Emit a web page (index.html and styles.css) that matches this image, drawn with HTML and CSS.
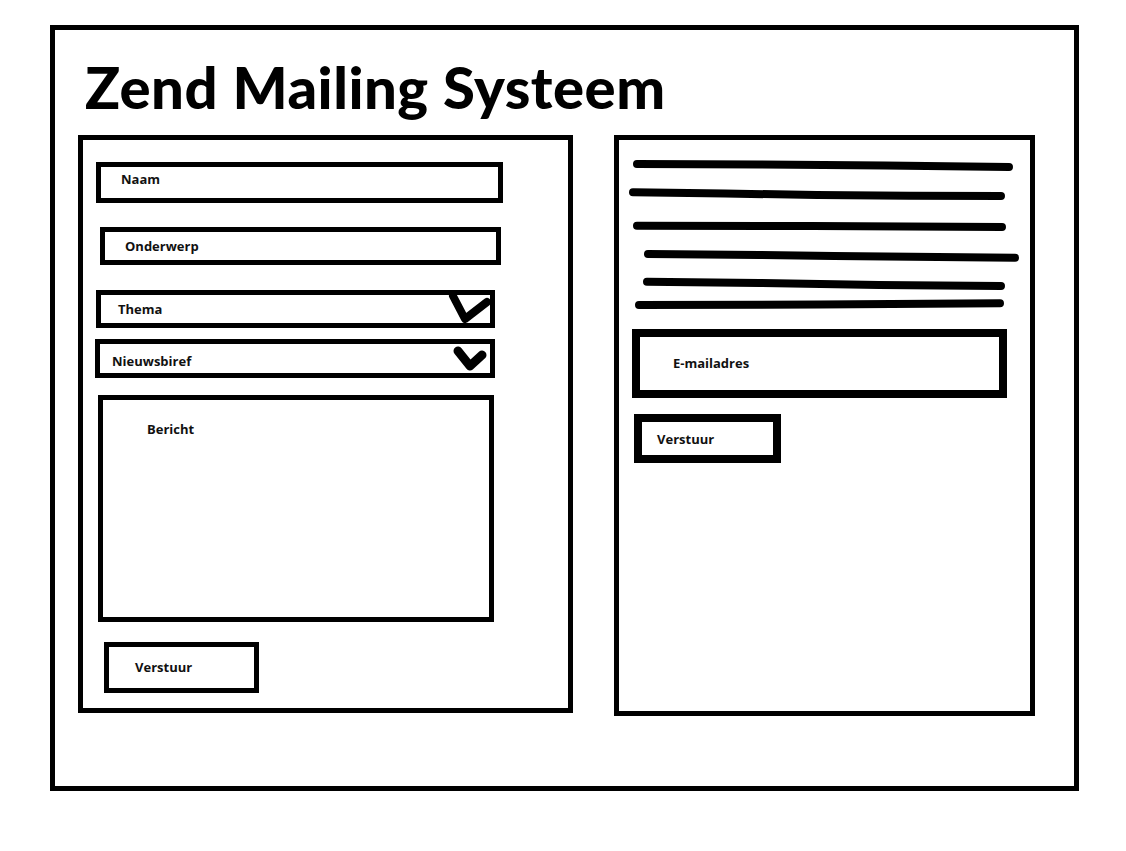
FILE: index.html
```html
<!DOCTYPE html>
<html>
<head>
    <meta charset="UTF-8">
    <title>Zend Mailing Systeem</title>
    <link rel="stylesheet" href="styles.css">
</head>
<body>
<div id="wrap">
    <h1 class="title">Zend Mailing Systeem</h1>
    <div class="panels">
        <div class="panel left">
            <div class="field naam">Naam</div>
            <div class="field onderwerp">Onderwerp</div>
            <div class="field thema">Thema
                <svg class="check" width="50" height="40" viewBox="0 0 50 40">
                    <polyline points="7,8 19,31 41,14"/>
                </svg>
            </div>
            <div class="field nieuwsbrief">Nieuwsbiref
                <svg class="check" width="40" height="32" viewBox="0 0 40 32">
                    <polyline points="8,7 20,22 32,11"/>
                </svg>
            </div>
            <div class="field bericht">Bericht</div>
            <div class="btn btn1">Verstuur</div>
        </div>
        <div class="panel right">
            <svg class="lines" width="410" height="175" viewBox="0 0 410 175">
                <polyline points="18,24 141,24.5 266,25.5 390,27"/>
                <polyline points="14,52.3 106,53.5 198,55 290,55.7 382,56"/>
                <polyline points="18,85.7 194,86 383,87"/>
                <polyline points="29,114 140,115 215,116 396,117.7"/>
                <polyline points="28,141.7 140,143 260,145 382,146"/>
                <polyline points="20,165 200,164.5 381,163.3"/>
            </svg>
            <div class="field email">E-mailadres</div>
            <div class="btn btn2">Verstuur</div>
        </div>
    </div>
</div>
</body>
</html>
```

FILE: styles.css
```css
* {
    margin: 0;
    padding: 0;
    box-sizing: border-box;
}
body {
    background-color: #fff;
    font-family: "Open Sans", "Liberation Sans", sans-serif;
}
#wrap {
    width: 1029px;
    height: 766px;
    margin: 25px 0 0 50px;
    border: 5px solid #000;
}
#wrap .title {
    margin: 28px 0 0 30px;
    height: 58px;
    font-family: Lato, "Open Sans", sans-serif;
    font-size: 58px;
    font-weight: 900;
    line-height: 58px;
    letter-spacing: 0.5px;
    color: #000;
}
#wrap .panels {
    display: flex;
    align-items: flex-start;
    gap: 41px;
    margin: 19px 0 0 23px;
}
#wrap .panel {
    border: 5px solid #000;
}
#wrap .left {
    width: 495px;
    height: 578px;
}
#wrap .right {
    width: 421px;
    height: 581px;
}
#wrap .field,
#wrap .btn {
    position: relative;
    border: 5px solid #000;
    font-size: 13px;
    font-weight: 700;
    line-height: 18px;
    color: #111;
}
#wrap .naam {
    width: 407px;
    height: 41px;
    margin: 22px 0 0 13px;
    padding: 3px 0 0 20px;
}
#wrap .onderwerp {
    width: 401px;
    height: 38px;
    margin: 24px 0 0 17px;
    padding: 5px 0 0 20px;
}
#wrap .thema {
    width: 399px;
    height: 38px;
    margin: 25px 0 0 13px;
    padding: 5px 0 0 17px;
}
#wrap .nieuwsbrief {
    width: 400px;
    height: 39px;
    margin: 11px 0 0 12px;
    padding: 8px 0 0 12px;
}
#wrap .bericht {
    width: 396px;
    height: 227px;
    margin: 17px 0 0 15px;
    padding: 20px 0 0 44px;
}
#wrap .btn1 {
    width: 155px;
    height: 51px;
    margin: 20px 0 0 21px;
    padding: 11px 0 0 26px;
}
#wrap .check {
    position: absolute;
    display: block;
}
#wrap .check polyline {
    fill: none;
    stroke: #000;
    stroke-linecap: round;
    stroke-linejoin: round;
}
#wrap .thema .check {
    left: 345px;
    top: -7px;
    stroke-width: 8;
}
#wrap .nieuwsbrief .check {
    left: 350px;
    top: 0;
    stroke-width: 9;
}
#wrap .lines {
    display: block;
}
#wrap .lines polyline {
    fill: none;
    stroke: #000;
    stroke-width: 8;
    stroke-linecap: round;
    stroke-linejoin: round;
}
#wrap .email {
    width: 375px;
    height: 69px;
    margin: 14px 0 0 13px;
    padding: 17px 0 0 33px;
    border-width: 8px;
}
#wrap .btn2 {
    width: 147px;
    height: 49px;
    margin: 16px 0 0 15px;
    padding: 8px 0 0 15px;
    border-width: 8px;
}
```
